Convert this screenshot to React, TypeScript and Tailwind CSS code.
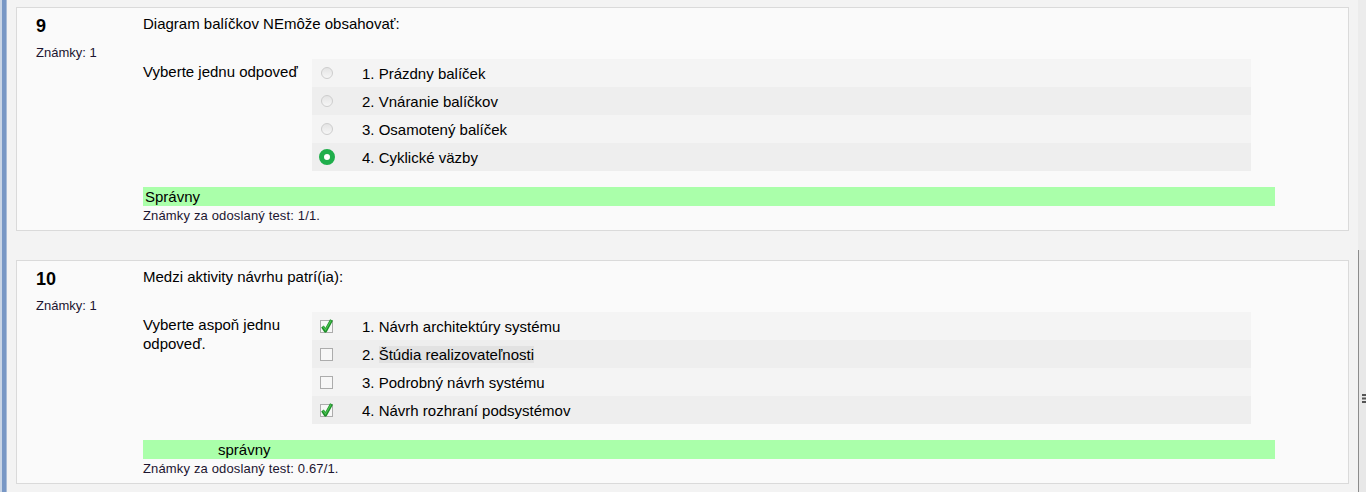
const FONT = { fontFamily: '"Liberation Sans", Arial, sans-serif' };

type Option = { text: string; checked: boolean; mark?: string };

interface Question {
  num: number;
  text: string;
  prompt: string;
  multi: boolean;
  options: Option[];
  feedback: string;
  feedbackIndent: boolean;
  score: string;
}

const QUESTIONS: Question[] = [
  {
    num: 9,
    text: "Diagram balíčkov NEmôže obsahovať:",
    prompt: "Vyberte jednu odpoveď",
    multi: false,
    options: [
      { text: "Prázdny balíček", checked: false },
      { text: "Vnáranie balíčkov", checked: false },
      { text: "Osamotený balíček", checked: false },
      { text: "Cyklické väzby", checked: true },
    ],
    feedback: "Správny",
    feedbackIndent: false,
    score: "Známky za odoslaný test: 1/1.",
  },
  {
    num: 10,
    text: "Medzi aktivity návrhu patrí(ia):",
    prompt: "Vyberte aspoň jednu odpoveď.",
    multi: true,
    options: [
      { text: "Návrh architektúry systému", checked: true },
      { text: "Štúdia realizovateľnosti", checked: false, mark: "highlight" },
      { text: "Podrobný návrh systému", checked: false },
      { text: "Návrh rozhraní podsystémov", checked: true },
    ],
    feedback: "správny",
    feedbackIndent: true,
    score: "Známky za odoslaný test: 0.67/1.",
  },
];

function Radio({ checked }: { checked: boolean }) {
  if (checked) {
    return <span className="block h-[16px] w-[16px] rounded-full border-[5px] border-[#1fae4b] bg-white" />;
  }
  return (
    <span className="block h-[12px] w-[12px] rounded-full border border-[#cdcdcd] bg-gradient-to-b from-[#e4e4e4] to-[#f6f6f6]" />
  );
}

function Checkbox({ checked }: { checked: boolean }) {
  return (
    <svg width="14" height="15" viewBox="0 0 14 15">
      <rect x="0.5" y="1.5" width="12" height="12" fill="#f7f7f7" stroke="#acacac" />
      {checked && (
        <>
          <path d="M2.5 7.5 L5.5 12 L11.5 1" fill="none" stroke="#1e8f2a" strokeWidth="3.2" strokeLinejoin="round" />
          <path d="M3 7.5 L5.5 11 L11 1.5" fill="none" stroke="#4cc652" strokeWidth="1.2" />
        </>
      )}
    </svg>
  );
}

function QuestionCard({ q }: { q: Question }) {
  return (
    <div className="mx-[9px] flex h-[224px] border border-[#dadada] bg-[#fafafa] pt-[7px]">
      {/* info column */}
      <div className="w-[126px] shrink-0 pl-[19px] pt-[2px]">
        <div className="text-[18px] font-bold leading-[18px] text-black">{q.num}</div>
        <div className="mt-[10px] text-[13px] leading-[16px] text-[#1c1530]">Známky: 1</div>
      </div>

      {/* content column */}
      <div className="flex-1">
        <div className="text-[15px] leading-[18px] text-black">{q.text}</div>

        <div className="mt-[26px] flex">
          <div className="w-[169px] shrink-0 pr-[4px] pt-[3px] text-[15px] leading-[19px] text-black">{q.prompt}</div>
          <div className="w-[939px]">
            {q.options.map((o, i) => (
              <div
                key={o.text}
                className={`flex h-[28px] items-center text-[15px] leading-[19px] text-black ${
                  i % 2 === 0 ? "bg-[#f4f4f4]" : "bg-[#eeeeee]"
                }`}
              >
                <div className="flex w-[30px] justify-center">
                  {q.multi ? <Checkbox checked={o.checked} /> : <Radio checked={o.checked} />}
                </div>
                <div className="ml-[20px]">
                  {i + 1}.{" "}
                  {o.mark ? <span className="bg-[#e2e2e2]">{o.text}</span> : o.text}
                </div>
              </div>
            ))}
          </div>
        </div>

        <div
          className={`mt-[16px] h-[19px] w-[1132px] bg-[#aaffaa] text-[15px] leading-[19px] text-black ${
            q.feedbackIndent ? "pl-[75px]" : "pl-[2px]"
          }`}
        >
          {q.feedback}
        </div>
        <div className="mt-[2px] text-[13px] leading-[15px] tracking-[0.15px] text-[#1c1530]">{q.score}</div>
      </div>
    </div>
  );
}

export default function App() {
  return (
    <div className="flex h-[492px] w-full overflow-hidden bg-[#f3f3f3]" style={FONT}>
      {/* left frame edge */}
      <div className="w-[7px] shrink-0 border-l-[2px] border-r border-l-[#c9d5e6] border-r-[#a9bcd8] bg-[#7897c5]" />

      {/* question list */}
      <div className="flex flex-1 flex-col gap-[29px] pt-[7px]">
        {QUESTIONS.map((q) => (
          <QuestionCard key={q.num} q={q} />
        ))}
      </div>

      {/* right splitter */}
      <div className="flex w-[8px] shrink-0 flex-col bg-[#ececec]">
        <div className="h-[250px]" />
        <div className="flex flex-1 flex-col border-l border-[#8c8c8c] bg-[#e8e8e8] pt-[144px]">
          <svg width="7" height="9" viewBox="0 0 7 9" className="ml-[3px]">
            <rect x="0" y="0" width="4" height="2" fill="#555" />
            <rect x="0" y="3.5" width="4" height="2" fill="#555" />
            <rect x="0" y="7" width="4" height="2" fill="#555" />
          </svg>
        </div>
      </div>
    </div>
  );
}
